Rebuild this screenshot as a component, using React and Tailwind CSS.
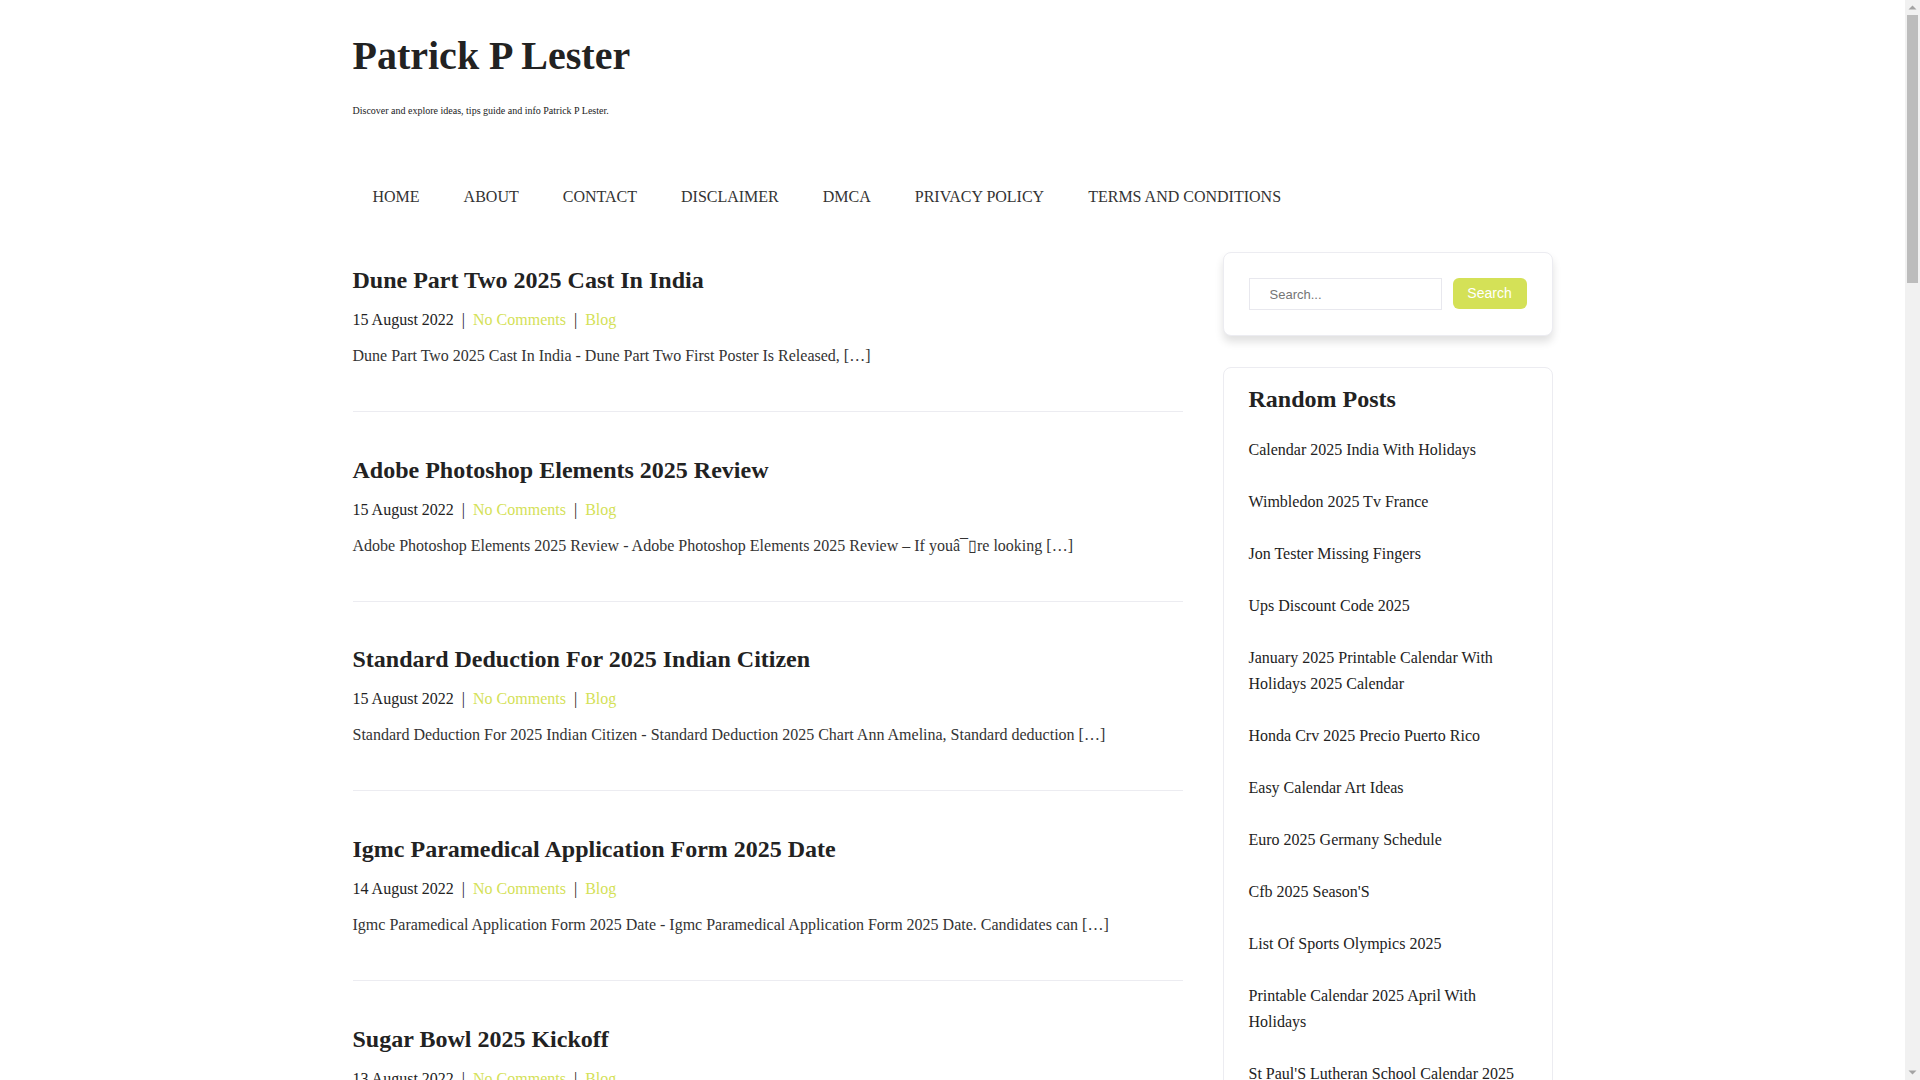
import React from "react";

const posts = [
  {
    title: "Dune Part Two 2025 Cast In India",
    date: "15 August 2022",
    excerpt: "Dune Part Two 2025 Cast In India - Dune Part Two First Poster Is Released, […]",
  },
  {
    title: "Adobe Photoshop Elements 2025 Review",
    date: "15 August 2022",
    excerpt:
      "Adobe Photoshop Elements 2025 Review - Adobe Photoshop Elements 2025 Review – If youâ¯▯re looking […]",
  },
  {
    title: "Standard Deduction For 2025 Indian Citizen",
    date: "15 August 2022",
    excerpt:
      "Standard Deduction For 2025 Indian Citizen - Standard Deduction 2025 Chart Ann Amelina, Standard deduction […]",
  },
  {
    title: "Igmc Paramedical Application Form 2025 Date",
    date: "14 August 2022",
    excerpt:
      "Igmc Paramedical Application Form 2025 Date - Igmc Paramedical Application Form 2025 Date. Candidates can […]",
  },
  {
    title: "Sugar Bowl 2025 Kickoff",
    date: "13 August 2022",
    excerpt: "Sugar Bowl 2025 Kickoff - Sugar Bowl 2025 Kickoff Time And Tv Channel […]",
  },
  {
    title: "Calendar 2025 India With Holidays",
    date: "13 August 2022",
    excerpt: "Calendar 2025 India With Holidays - Download Free Printable Calendar […]",
  },
];

const randomPosts = [
  "Calendar 2025 India With Holidays",
  "Wimbledon 2025 Tv France",
  "Jon Tester Missing Fingers",
  "Ups Discount Code 2025",
  "January 2025 Printable Calendar With Holidays 2025 Calendar",
  "Honda Crv 2025 Precio Puerto Rico",
  "Easy Calendar Art Ideas",
  "Euro 2025 Germany Schedule",
  "Cfb 2025 Season'S",
  "List Of Sports Olympics 2025",
  "Printable Calendar 2025 April With Holidays",
  "St Paul'S Lutheran School Calendar 2025",
  "Nfl Draft 2025 Order",
];

const nav = ["HOME", "ABOUT", "CONTACT", "DISCLAIMER", "DMCA", "PRIVACY POLICY", "TERMS AND CONDITIONS"];

export default function App() {
  return (
    <div className="min-h-screen bg-white font-['Liberation_Serif',serif] text-[#222]">
      {/* page area (viewport minus scrollbar) */}
      <div className="w-[calc(100%-15px)]">
        {/* Header */}
        <header className="mx-auto w-[1200px] pt-[32px]">
          <h1 className="text-[40px] font-bold leading-[48px] text-[#222]">Patrick P Lester</h1>
          <p className="mt-[24px] text-[10px] leading-[14px] text-[#222]">
            Discover and explore ideas, tips guide and info Patrick P Lester.
          </p>
          <nav className="mt-[67px] flex gap-1">
            {nav.map((item) => (
              <a key={item} className="px-5 text-[16px] leading-[24px] text-[#333]">
                {item}
              </a>
            ))}
          </nav>
        </header>

        {/* Body */}
        <div className="mx-auto mt-[43px] flex w-[1200px] items-start gap-[40px]">
          <main className="w-[830px] pt-[13px]">
            {posts.map((p) => (
              <article key={p.title} className="mb-[42.7px] border-b border-[#ececf1] pb-[43px]">
                <h2 className="text-[24px] font-bold leading-[30px] text-[#222]">{p.title}</h2>
                <div className="mt-[13px] text-[16px] leading-[24px] text-[#222]">
                  {p.date}
                  <span className="mx-2">|</span>
                  <a className="text-[#d4e157]">No Comments</a>
                  <span className="mx-2">|</span>
                  <a className="text-[#d4e157]">Blog</a>
                </div>
                <p className="mt-3 text-[16px] leading-[24px] text-[#333]">{p.excerpt}</p>
              </article>
            ))}
          </main>

          <aside className="w-[330px] shrink-0">
            {/* Search */}
            <div className="rounded-lg border border-[#ececf1] bg-white p-[25px] shadow-[0_6px_8px_rgba(0,0,0,0.12)]">
              <form className="flex gap-[11px]">
                <input
                  placeholder="Search..."
                  className="h-[32px] w-[193px] border border-[#e8e8ee] px-5 font-['Liberation_Sans',sans-serif] text-[13px] text-[#555] placeholder:text-[#757575] outline-none"
                />
                <button
                  type="button"
                  className="h-[31px] w-[74px] rounded-md bg-[#d4e157] font-['Liberation_Sans',sans-serif] text-[14px] text-white"
                >
                  Search
                </button>
              </form>
            </div>

            {/* Random posts */}
            <div className="mt-[31px] rounded-lg border border-[#ececf1] bg-white px-[25px] pb-[20px] pt-[16px]">
              <h3 className="mb-[10px] text-[24px] font-bold leading-[30px] text-[#222]">Random Posts</h3>
              <ul>
                {randomPosts.map((r) => (
                  <li key={r} className="py-[13px] text-[16px] leading-[26px] text-[#222]">
                    {r}
                  </li>
                ))}
              </ul>
            </div>
          </aside>
        </div>
      </div>

      {/* scrollbar */}
      <div className="fixed right-0 top-0 flex h-screen w-[15px] flex-col items-center bg-[#f1f1f1]">
        <svg width="15" height="15" viewBox="0 0 15 15" className="shrink-0">
          <path d="M3.5 9.5 L7.5 5.5 L11.5 9.5 Z" fill="#a3a3a3" />
        </svg>
        <div className="h-[268px] w-[11px] bg-[#bcbcbc]" />
        <div className="flex-1" />
        <svg width="15" height="15" viewBox="0 0 15 15" className="shrink-0">
          <path d="M3.5 5.5 L7.5 9.5 L11.5 5.5 Z" fill="#a3a3a3" />
        </svg>
      </div>
    </div>
  );
}
